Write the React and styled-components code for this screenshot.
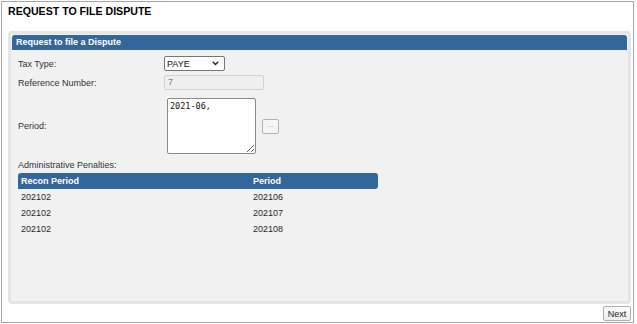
import React from 'react';
import styled, { createGlobalStyle } from 'styled-components';

const GlobalStyle = createGlobalStyle`
  html, body {
    margin: 0;
    padding: 0;
    background: #ffffff;
  }
  body {
    font-family: "Liberation Sans", Arial, sans-serif;
  }
`;

const Frame = styled.div`
  box-sizing: border-box;
  margin: 1px 0 0 1px;
  width: 633px;
  height: 322px;
  border: 1px solid #a6a6a6;
  padding: 3px 2px 0 6px;
  display: flex;
  flex-direction: column;
`;

const PageTitle = styled.h1`
  margin: 0;
  font-size: 10.6px;
  line-height: 13px;
  font-weight: bold;
  color: #000;
`;

const Panel = styled.section`
  box-sizing: border-box;
  margin-top: 13px;
  height: 273px;
  border: 3px solid #e5e5e5;
  border-radius: 4px;
  background: #f1f1f1;
  padding: 1px;
  display: flex;
  flex-direction: column;
`;

const PanelHeader = styled.div`
  background: #33669a;
  color: #fff;
  font-size: 9px;
  font-weight: bold;
  line-height: 15px;
  padding-left: 4px;
  border-radius: 3px 3px 0 0;
`;

const PanelBody = styled.div`
  padding: 6px 6px;
  display: flex;
  flex-direction: column;
`;

const FormRow = styled.div`
  display: grid;
  grid-template-columns: 146px auto;
  align-items: center;
  margin-top: ${p => p.$gap || 0}px;
`;

const Label = styled.span`
  font-size: 9px;
  color: #333;
`;

const Field = styled.div`
  display: flex;
  align-items: center;
`;

const SelectBox = styled.div`
  box-sizing: border-box;
  width: 61px;
  height: 15px;
  border: 1px solid #767676;
  border-radius: 2px;
  background: #fff;
  display: flex;
  align-items: center;
  justify-content: space-between;
  padding: 0 5px 0 2px;
  font-size: 9px;
  color: #111;
`;

const TextInput = styled.div`
  box-sizing: border-box;
  width: 100px;
  height: 15px;
  border: 1px solid #d2d2d2;
  border-radius: 2px;
  background: #efefef;
  font-size: 9px;
  line-height: 13px;
  color: #7d7d7d;
  padding-left: 3px;
`;

const PeriodArea = styled.textarea`
  box-sizing: border-box;
  width: 89px;
  height: 56px;
  margin: 0 0 0 3px;
  border: 1px solid #8a8a8a;
  border-radius: 2px;
  background: #fff;
  font-family: "DejaVu Sans Mono", "Liberation Mono", monospace;
  font-size: 8.5px;
  color: #111;
  padding: 2px 2px;
  outline: none;
`;

const PickButton = styled.button`
  box-sizing: border-box;
  width: 17px;
  height: 15px;
  margin-left: 6px;
  padding: 0 0 4px;
  border: 1px solid #b3b3b3;
  border-radius: 2px;
  background: #f5f5f5;
  color: #9a9a9a;
  font-family: "Liberation Sans", Arial, sans-serif;
  font-size: 7px;
  line-height: 9px;
`;

const SectionLabel = styled.div`
  margin-top: 6px;
  font-size: 9px;
  line-height: 11px;
  color: #333;
`;

const Table = styled.div`
  margin-top: 2px;
  width: 360px;
  display: grid;
  grid-template-columns: 232px 1fr;
  font-size: 9px;
`;

const HeadCell = styled.div`
  background: #33669a;
  color: #fff;
  font-weight: bold;
  line-height: 16px;
  padding-left: 3px;
  border-radius: ${p => (p.$first ? '3px 0 0 0' : '0 3px 3px 0')};
`;

const Cell = styled.div`
  color: #2a2a2a;
  line-height: 16px;
  padding-left: 3px;
`;

const Footer = styled.div`
  display: flex;
  justify-content: flex-end;
  margin-top: 2px;
`;

const NextButton = styled.button`
  box-sizing: border-box;
  height: 15px;
  width: 28px;
  padding: 0;
  border: 1px solid #adadad;
  border-radius: 2px;
  background: linear-gradient(#fbfbfb, #efefef);
  font-family: "Liberation Sans", Arial, sans-serif;
  font-size: 9px;
  color: #222;
`;

const Chevron = () => (
  <svg width="7" height="5" viewBox="0 0 7 5">
    <polyline points="0.8,0.8 3.5,3.6 6.2,0.8" fill="none" stroke="#222" strokeWidth="1.4" />
  </svg>
);

const penalties = [
  { recon: '202102', period: '202106' },
  { recon: '202102', period: '202107' },
  { recon: '202102', period: '202108' },
];

const App = () => {
  return (
    <>
      <GlobalStyle />
      <Frame>
        <PageTitle>REQUEST TO FILE DISPUTE</PageTitle>
        <Panel>
          <PanelHeader>Request to file a Dispute</PanelHeader>
          <PanelBody>
            <FormRow>
              <Label>Tax Type:</Label>
              <Field>
                <SelectBox>
                  <span>PAYE</span>
                  <Chevron />
                </SelectBox>
              </Field>
            </FormRow>
            <FormRow $gap={4}>
              <Label>Reference Number:</Label>
              <Field>
                <TextInput>7</TextInput>
              </Field>
            </FormRow>
            <FormRow $gap={8}>
              <Label>Period:</Label>
              <Field>
                <PeriodArea readOnly defaultValue="2021-06," />
                <PickButton>...</PickButton>
              </Field>
            </FormRow>
            <SectionLabel>Administrative Penalties:</SectionLabel>
            <Table>
              <HeadCell $first>Recon Period</HeadCell>
              <HeadCell>Period</HeadCell>
              {penalties.map((row, i) => (
                <React.Fragment key={i}>
                  <Cell>{row.recon}</Cell>
                  <Cell>{row.period}</Cell>
                </React.Fragment>
              ))}
            </Table>
          </PanelBody>
        </Panel>
        <Footer>
          <NextButton>Next</NextButton>
        </Footer>
      </Frame>
    </>
  );
};

export default App;
